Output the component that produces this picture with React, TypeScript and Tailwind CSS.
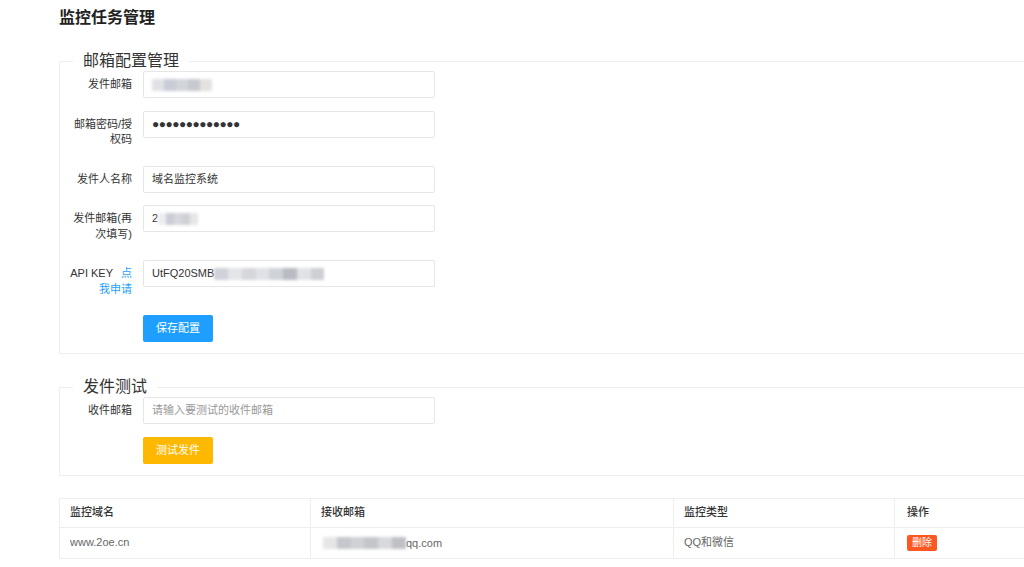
import React from "react";

const Blur = ({ w, shades }: { w: number; shades: string[] }) => (
	<span className="inline-flex h-[12px] align-middle blur-[1.5px]" style={{ width: w }}>
		{shades.map((c, i) => (
			<span key={i} className="h-full flex-1" style={{ backgroundColor: c }} />
		))}
	</span>
);

const Row = ({ label, children }: { label: React.ReactNode; children: React.ReactNode }) => (
	<div className="mb-[12px] flex items-start">
		<label className="w-[83px] shrink-0 break-all pl-[10px] pr-[11px] py-[6px] text-right text-[11px] leading-[15.5px] text-[#333]">
			{label}
		</label>
		{children}
	</div>
);

const Field = ({ children, className = "" }: { children?: React.ReactNode; className?: string }) => (
	<div
		className={`flex h-[27px] w-[292px] items-center rounded-[2px] border border-[#e6e6e6] bg-white px-[8px] text-[11px] text-[#333] ${className}`}
	>
		{children}
	</div>
);

const App = () => {
	return (
		<div
			className="min-h-screen w-full overflow-hidden bg-white pt-[8px]"
			style={{ fontFamily: '"Liberation Sans", "Noto Sans CJK SC", sans-serif' }}
		>
			<div className="ml-[59px] w-[1010px]">
				<h1 className="text-[16px] font-bold leading-[20px] text-[#222]">监控任务管理</h1>

				<fieldset className="mt-[23px] border border-[#eee] pb-[11px]">
					<legend className="ml-[13px] px-[10px] text-[16px] leading-[20px] text-[#333]">
						邮箱配置管理
					</legend>
					<Row label="发件邮箱">
						<Field>
							<Blur w={60} shades={["#dfe1e6", "#c9ccd6", "#d3d5dc", "#c7c9cf", "#e4e2e0"]} />
						</Field>
					</Row>
					<Row label="邮箱密码/授权码">
						<Field className="text-[12px] tracking-[-0.5px] text-[#111]">●●●●●●●●●●●●●</Field>
					</Row>
					<Row label="发件人名称">
						<Field>域名监控系统</Field>
					</Row>
					<Row label="发件邮箱(再次填写)">
						<Field>
							<span>2</span>
							<Blur w={40} shades={["#eceef0", "#cbcdd6", "#d6d8de", "#cfd1d6", "#e6e6e8"]} />
						</Field>
					</Row>
					<Row
						label={
							<>
								<span className="block">
									API KEY<span className="ml-[8px] text-[#1E9FFF]">点</span>
								</span>
								<span className="block text-[#1E9FFF]">我申请</span>
							</>
						}
					>
						<Field>
							<span>UtFQ20SMB</span>
							<Blur
								w={110}
								shades={["#d0d2d9", "#e4e5e8", "#d5d7dc", "#dfe1e6", "#cfd2d8", "#b9bbc2", "#e1e2e6", "#cdcfd4"]}
							/>
						</Field>
					</Row>
					<div className="pl-[83px]">
						<button className="h-[27px] w-[70px] rounded-[2px] bg-[#1E9FFF] text-[11px] text-white">
							保存配置
						</button>
					</div>
				</fieldset>

				<fieldset className="mt-[23px] border border-[#eee] pb-[11px]">
					<legend className="ml-[13px] px-[10px] text-[16px] leading-[20px] text-[#333]">发件测试</legend>
					<Row label="收件邮箱">
						<Field className="text-[#999]">请输入要测试的收件邮箱</Field>
					</Row>
					<div className="pl-[83px]">
						<button className="h-[27px] w-[70px] rounded-[2px] bg-[#FFB800] text-[11px] text-white">
							测试发件
						</button>
					</div>
				</fieldset>

				<table className="mt-[22px] w-[1010px] border-collapse border border-[#eee] text-left text-[11px]">
					<thead>
						<tr className="h-[29px] text-[#333]">
							<th className="w-[251px] border border-[#eee] pl-[10px] font-medium">监控域名</th>
							<th className="w-[363px] border border-[#eee] pl-[10px] font-medium">接收邮箱</th>
							<th className="w-[221px] border border-[#eee] pl-[10px] font-medium">监控类型</th>
							<th className="border border-[#eee] pl-[12px] font-medium">操作</th>
						</tr>
					</thead>
					<tbody>
						<tr className="h-[31px] text-[#666]">
							<td className="border border-[#eee] pl-[10px]">www.2oe.cn</td>
							<td className="border border-[#eee] pl-[12px]">
								<Blur w={83} shades={["#e6e6e8", "#c6c7cc", "#d0d1d5", "#c4c5ca", "#d8d9dc", "#bfc0c4"]} />
								<span className="align-middle">qq.com</span>
							</td>
							<td className="border border-[#eee] pl-[10px]">QQ和微信</td>
							<td className="border border-[#eee] pl-[12px]">
								<span className="inline-block rounded-[2px] bg-[#FF5722] px-[5px] text-[10px] leading-[16px] text-white">
									删除
								</span>
							</td>
						</tr>
					</tbody>
				</table>
			</div>
		</div>
	);
};

export default App;
